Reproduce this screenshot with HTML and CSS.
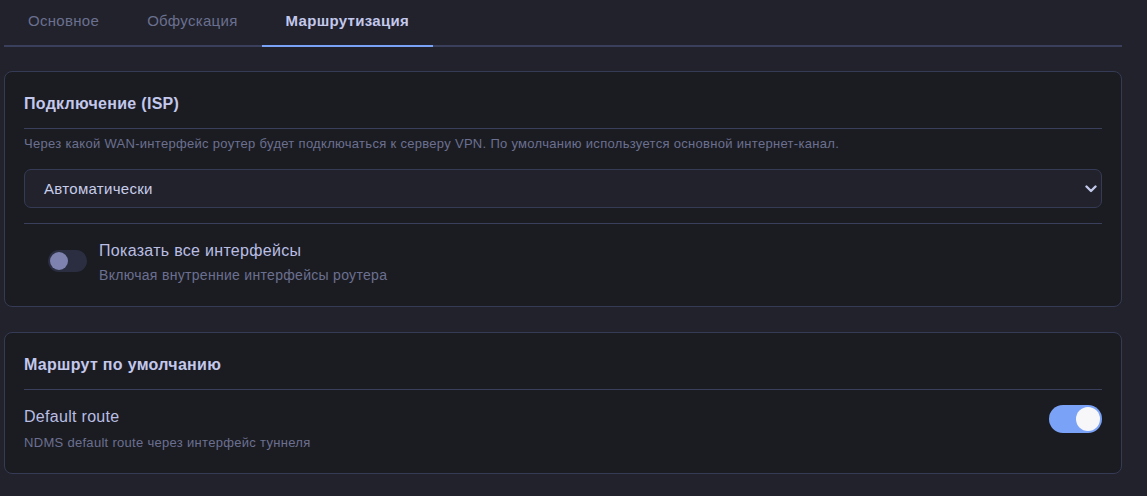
FILE: index.html
```html
<!DOCTYPE html>
<html lang="ru">
<head>
<meta charset="utf-8">
<title>Маршрутизация</title>
<link rel="stylesheet" href="styles.css">
</head>
<body>
<div class="page">
  <nav class="tabs">
    <div class="tab">Основное</div>
    <div class="tab">Обфускация</div>
    <div class="tab active">Маршрутизация</div>
  </nav>

  <section class="card">
    <div class="card-head">Подключение (ISP)</div>
    <p class="desc">Через какой WAN-интерфейс роутер будет подключаться к серверу VPN. По умолчанию используется основной интернет-канал.</p>
    <div class="select">
      <span>Автоматически</span>
      <svg class="chev" width="12" height="8" viewBox="0 0 12 8"><path d="M1.5 1.5 L6 6 L10.5 1.5" fill="none" stroke="#c3c8ea" stroke-width="2.4" stroke-linecap="round" stroke-linejoin="round"/></svg>
    </div>
    <div class="opt-section">
      <div class="opt-row">
        <span class="toggle off"><span class="knob"></span></span>
        <div class="opt-text">
          <div class="opt-label">Показать все интерфейсы</div>
          <div class="opt-sub">Включая внутренние интерфейсы роутера</div>
        </div>
      </div>
    </div>
  </section>

  <section class="card card2">
    <div class="card-head">Маршрут по умолчанию</div>
    <div class="route-row">
      <div class="route-text">
        <div class="opt-label">Default route</div>
        <div class="route-sub">NDMS default route через интерфейс туннеля</div>
      </div>
      <span class="toggle on"><span class="knob"></span></span>
    </div>
  </section>
</div>
</body>
</html>
```

FILE: styles.css
```css
* { box-sizing: border-box; }
html, body { margin: 0; padding: 0; }
body {
  background: #21222b;
  font-family: "Liberation Sans", Arial, sans-serif;
  letter-spacing: 0.3px;
  color: #c0c6e8;
  height: 496px;
  overflow: hidden;
}
.page {
  width: 1118px;
  margin-left: 4px;
}
.tabs {
  display: flex;
  border-bottom: 2px solid #3a3f5c;
}
.tab {
  padding: 11px 24px 14px;
  line-height: 20px;
  font-size: 15px;
  color: #6b7090;
  margin-bottom: -2px;
  border-bottom: 2px solid transparent;
}
.tab.active {
  color: #c3c8ec;
  font-weight: bold;
  border-bottom-color: #7aa2f7;
}
.card {
  margin-top: 24px;
  background: #1b1c22;
  border: 1px solid #363b55;
  border-radius: 8px;
  padding: 0 19px 22px;
}
.card2 {
  margin-top: 25px;
  padding-bottom: 21px;
}
.card-head {
  padding: 21px 0 13px;
  border-bottom: 1px solid #3a3f5c;
  font-size: 16px;
  line-height: 22px;
  font-weight: bold;
  color: #c3c8ec;
}
.desc {
  margin: 6px 0 0;
  font-size: 13px;
  line-height: 18px;
  color: #6b7090;
}
.select {
  margin-top: 16px;
  height: 39px;
  border: 1px solid #363b55;
  border-radius: 7px;
  background: #21222b;
  display: flex;
  align-items: center;
  justify-content: space-between;
  padding: 0 4px 0 19px;
  font-size: 15px;
  color: #c8cdea;
}
.chev { display: block; margin-top: 1px; }
.opt-section {
  margin-top: 15px;
  border-top: 1px solid #3a3f5c;
  padding: 17px 0 0 24px;
}
.opt-row {
  display: flex;
  align-items: flex-start;
  gap: 12px;
}
.opt-label {
  font-size: 16px;
  line-height: 20px;
  color: #b9bee2;
}
.opt-sub {
  margin-top: 5px;
  font-size: 14px;
  line-height: 18px;
  color: #6b7090;
}
.toggle {
  display: flex;
  align-items: center;
  flex-shrink: 0;
}
.toggle.off {
  width: 39px;
  height: 22px;
  border-radius: 11px;
  background: #2b2e41;
  padding: 0 2px;
  margin-top: 9px;
}
.toggle.off .knob {
  width: 18px;
  height: 18px;
  border-radius: 50%;
  background: #7d82ae;
}
.toggle.on {
  width: 53px;
  height: 28px;
  border-radius: 14px;
  background: #7aa2f7;
  padding: 0 2px;
  justify-content: flex-end;
}
.toggle.on .knob {
  width: 24px;
  height: 24px;
  border-radius: 50%;
  background: #f7f7f9;
}
.route-row {
  display: flex;
  justify-content: space-between;
  align-items: flex-start;
  padding-top: 15px;
}
.route-text { padding-top: 2px; }
.route-sub {
  margin-top: 7px;
  font-size: 13px;
  line-height: 18px;
  color: #6b7090;
}
```
